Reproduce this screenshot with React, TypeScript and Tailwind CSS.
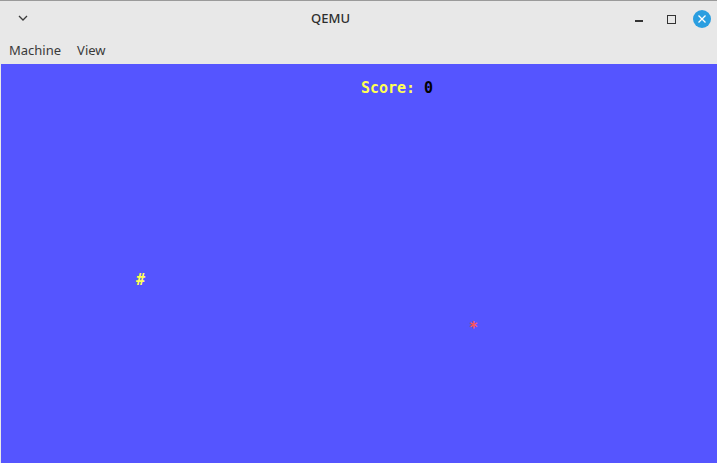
import React from "react";

const Cell = ({ col, row, ch, color }: { col: number; row: number; ch: string; color: string }) => (
  <span
    className="absolute w-[9px] h-[16px] flex items-center justify-center leading-[16px] text-[15px] font-bold"
    style={{ left: col * 9, top: row * 16, color }}
  >
    {ch}
  </span>
);

export default function App() {
  const score = "Score:";
  return (
    <div className="w-[717px] h-[463px] flex flex-col bg-[#e8e8e8] overflow-hidden" style={{ fontFamily: '"Noto Sans", "Open Sans", sans-serif' }}>
      <div className="h-[37px] flex items-center border-t border-[#9a9a9a] relative shrink-0">
        <div className="w-[46px] flex justify-center">
          <svg width="12" height="8" viewBox="0 0 12 8" className="mt-[-2px]">
            <path d="M2 2 L6 6 L10 2" stroke="#3a3a3a" strokeWidth="1.3" fill="none" />
          </svg>
        </div>
        <div className="flex-1 flex justify-center text-[13px] text-[#2e2e2e] font-medium pr-[8px]">QEMU</div>
        <div className="flex items-center">
          <div className="w-[32px] h-[24px] flex items-center justify-center">
            <div className="w-[8px] h-[1.5px] bg-[#333] mt-[4px]" />
          </div>
          <div className="w-[32px] h-[24px] flex items-center justify-center">
            <div className="w-[9px] h-[9px] border-[1.5px] border-[#333]" />
          </div>
          <div className="w-[30px] h-[24px] flex items-center justify-center">
            <div className="w-[18px] h-[18px] rounded-full bg-[#2a9ee0] flex items-center justify-center">
              <svg width="10" height="10" viewBox="0 0 10 10">
                <path d="M1.5 1.5 L8.5 8.5 M8.5 1.5 L1.5 8.5" stroke="#fff" strokeWidth="1.3" />
              </svg>
            </div>
          </div>
        </div>
      </div>
      <div className="h-[27px] flex items-start gap-[16px] pl-[9px] pt-[4px] text-[13px] text-[#3a3a3a] shrink-0">
        <span>Machine</span>
        <span>View</span>
      </div>
      <div className="flex-1 bg-[#5555ff] ml-[1px] relative" style={{ fontFamily: '"DejaVu Sans Mono", "Liberation Mono", monospace' }}>
        {score.split("").map((c, i) => (
          <Cell key={i} col={40 + i} row={1} ch={c} color="#ffff55" />
        ))}
        <Cell col={47} row={1} ch="0" color="#000000" />
        <Cell col={15} row={13} ch="#" color="#ffff55" />
        <Cell col={52} row={16} ch="*" color="#ff5555" />
      </div>
    </div>
  );
}
